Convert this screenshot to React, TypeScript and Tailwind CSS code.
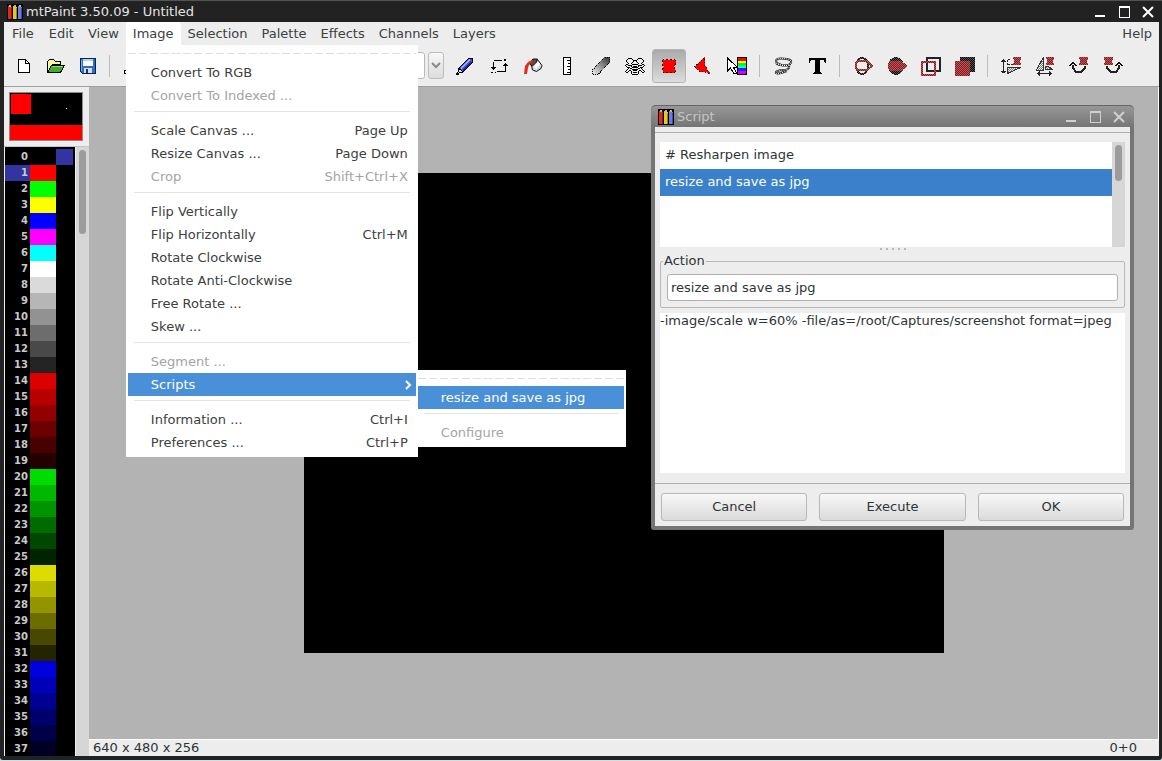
import { useState, type ReactNode } from "react";
import clsx from "clsx";

const palette = [
  "#000000", "#ff0000", "#00ff00", "#ffff00", "#0000ff", "#ff00ff", "#00ffff", "#ffffff",
  "#dadada", "#b6b6b6", "#929292", "#6d6d6d", "#494949", "#242424",
  "#dc0000", "#b80000", "#940000", "#6c0000", "#480000", "#240000",
  "#00dc00", "#00b800", "#009400", "#006c00", "#004800", "#002400",
  "#dcdc00", "#b8b800", "#949400", "#6c6c00", "#484800", "#242400",
  "#0000dc", "#0000b8", "#000094", "#00006c", "#000048", "#000024",
];

type Item = { label: string; keys?: string; off?: boolean; sub?: boolean };

const imageMenu: Item[][] = [
  [{ label: "Convert To RGB" }, { label: "Convert To Indexed ...", off: true }],
  [
    { label: "Scale Canvas ...", keys: "Page Up" },
    { label: "Resize Canvas ...", keys: "Page Down" },
    { label: "Crop", keys: "Shift+Ctrl+X", off: true },
  ],
  [
    { label: "Flip Vertically" },
    { label: "Flip Horizontally", keys: "Ctrl+M" },
    { label: "Rotate Clockwise" },
    { label: "Rotate Anti-Clockwise" },
    { label: "Free Rotate ..." },
    { label: "Skew ..." },
  ],
  [{ label: "Segment ...", off: true }, { label: "Scripts", sub: true }],
  [{ label: "Information ...", keys: "Ctrl+I" }, { label: "Preferences ...", keys: "Ctrl+P" }],
];

function Icon({ smooth, children }: { smooth?: boolean; children: ReactNode }) {
  return (
    <svg
      width="20"
      height="20"
      viewBox="0 0 20 20"
      shapeRendering={smooth ? "auto" : "crispEdges"}
      fill="none"
      aria-hidden="true"
    >
      {children}
    </svg>
  );
}

// checkerboard fills shared by the dithered icons
function Patterns() {
  return (
    <svg width="0" height="0" className="absolute" aria-hidden="true">
      <defs>
        <pattern id="redDither" width="2" height="2" patternUnits="userSpaceOnUse">
          <rect width="2" height="2" fill="#dc4a50" />
          <rect width="1" height="1" fill="#66282a" />
          <rect x="1" y="1" width="1" height="1" fill="#66282a" />
        </pattern>
        <pattern id="blackDither" width="2" height="2" patternUnits="userSpaceOnUse">
          <rect width="2" height="2" fill="#555" />
          <rect width="1" height="1" fill="#000" />
          <rect x="1" y="1" width="1" height="1" fill="#000" />
        </pattern>
        <pattern id="grayDither" width="2" height="2" patternUnits="userSpaceOnUse">
          <rect width="2" height="2" fill="#eee" />
          <rect width="1" height="1" fill="#777" />
          <rect x="1" y="1" width="1" height="1" fill="#777" />
        </pattern>
        <linearGradient id="fade" x1="1" y1="0" x2="0" y2="1">
          <stop offset="0.1" stopColor="#444" />
          <stop offset="1" stopColor="#f4f4f4" />
        </linearGradient>
      </defs>
    </svg>
  );
}

const NewIcon = () => (
  <Icon>
    <path d="M4.5 3.5h7l4 4v9h-11z" fill="#fff" stroke="#000" />
    <path d="M11.5 3.5v4h4" stroke="#000" />
  </Icon>
);

const OpenIcon = () => (
  <Icon>
    <path d="M1.5 16V5.5L3.5 3.5h4l2 2h5v3h-8z" fill="#fdf6a0" stroke="#000" />
    <path d="M1.5 16.5l4-7h13l-4 7z" fill="#3fae2a" stroke="#000" />
    <path d="M6 10.5h11" stroke="#8be070" />
  </Icon>
);

const SaveIcon = () => (
  <Icon>
    <path d="M2.5 2.5h15v15h-13l-2-2z" fill="#2c6fc4" stroke="#0b2350" />
    <rect x="5" y="3" width="10" height="7" fill="#fff" />
    <rect x="5" y="3" width="10" height="2" fill="#a9d4f5" />
    <rect x="6" y="12" width="8" height="5" fill="#d8dde4" />
    <rect x="8" y="13" width="2" height="4" fill="#1c3566" />
    <path d="M3.5 4v11" stroke="#6fb1ee" />
  </Icon>
);

const CutIcon = () => (
  <Icon>
    <path d="M2 14h3v3h-3zM5 13l8-10M7 3l6 11M13 14h3v3h-3z" stroke="#000" />
  </Icon>
);

const PencilIcon = () => (
  <Icon>
    <path d="M3.5 12.5L13.500 2.500h4v4L8 16z" fill="#4a50e8" stroke="#000" />
    <path d="M6 12.500l9-9" stroke="#a4aaff" strokeWidth="2" />
    <path d="M8 14.500l8.500-8.500" stroke="#1a1f9c" />
    <path d="M2.500 17.500l1.500-5 4 3.500z" fill="#e6dcb0" stroke="#000" />
    <path d="M1 17h3v2h-3z" fill="#000" />
  </Icon>
);

const SelectIcon = () => (
  <Icon>
    <path d="M4.5 5.500v6M4.500 4.500h8M16.500 8v8M8 15.500h9" stroke="#000" />
    <path d="M2 11h5v1h-5zM3 12h3v1h-3zM4 13h1v1h-1zM14 9h5v1h-5zM15 8h3v1h-3zM16 7h1v1h-1z" fill="#000" />
    <path d="M15 3h2v2h-2zM2 16h2v1h-2zM6 16h1v1h-1z" fill="#000" />
  </Icon>
);

const FillIcon = () => (
  <Icon smooth>
    <path d="M8.500 9.500L14.500 3.500L19 9.500L18 12.500L13.500 15.500L9.500 14z" fill="#d4dadb" stroke="#111" />
    <path d="M12 12l4-5" stroke="#fff" strokeWidth="3" />
    <path d="M7 6l3-3h4.500l-1 3-4 4-2-1z" fill="#70463c" stroke="#111" />
    <path d="M1 18l1-8 3-4 4-2v2L6 9l-1 3-1 6z" fill="#e0301a" />
  </Icon>
);

const RulerIcon = () => (
  <Icon>
    <rect x="6.5" y="1.5" width="7" height="17" fill="#fff" stroke="#000" />
    <path d="M10 4.5h3M11 7.5h2M10 10.5h3M11 13.5h2M10 16.5h3" stroke="#000" />
  </Icon>
);

const GradientIcon = () => (
  <Icon>
    <path d="M1 14L13 1h6v5L7 19h-6z" fill="url(#fade)" />
    <path d="M1.5 14L13.5 1.5h5v5L7 18.5h-5.5z" stroke="#000" strokeDasharray="1 1" />
  </Icon>
);

const cloneRows = [
  "...####......####...",
  "..#....#....#....#..",
  ".#......####......#.",
  ".#......#..#......#.",
  "..#....#....#....#..",
  "...#..#......#..#...",
  ".##....######....##.",
  "#..####......####..#",
  ".#....#.####.#....#.",
  "..###..######..###..",
  "...#.##......##.#...",
  "..#....######....#..",
  ".#..##..####..##..#.",
  "#..#..#......#..#..#",
  ".##...#.####.#...##.",
  "......#......#......",
  ".......######.......",
];

const CloneIcon = () => (
  <Icon>
    {cloneRows.map((row, y) =>
      [...row].map((c, x) => c === "#" && <rect key={`${x}-${y}`} x={x} y={y + 2} width="1" height="1" fill="#000" />)
    )}
  </Icon>
);

const PolygonIcon = () => (
  <Icon>
    <path d="M3.500 4.500l2-1h9l2 1v3l-1 3 1 4-1 2H4.500l-1-2 1-4-1-2z" fill="#f00" stroke="#300" strokeDasharray="2 2" />
    <path d="M4 4h12v4l-1 3 1 5H4l1-5-1-3z" fill="#f00" />
  </Icon>
);

const LassoFillIcon = () => (
  <Icon>
    <path d="M2 11L11 2v6l3 6 3 4-5-3H7z" fill="#f00" stroke="#f00" />
    <path d="M1.500 11L11.500 1.500v7l3 6 2 4-5-3H7z" stroke="#000" strokeDasharray="1 2" />
  </Icon>
);

const PickIcon = () => (
  <Icon>
    <rect x="11" y="2" width="9" height="3" fill="#f00" />
    <rect x="11" y="5" width="9" height="2" fill="#ff0" />
    <rect x="11" y="7" width="9" height="3" fill="#0f0" />
    <rect x="11" y="10" width="9" height="2" fill="#0ff" />
    <rect x="11" y="12" width="9" height="3" fill="#22f" />
    <rect x="11" y="15" width="9" height="3" fill="#d0d" />
    <path d="M10.5 1.5h9v17h-9z" stroke="#000" />
    <path d="M.5 2v13l3-3 3 5h3l-3-5.5h4z" fill="#fff" stroke="#000" />
  </Icon>
);

const lassoPath = "M14 9C10 11 3 7 3 5C3 2 9 2 14 3C19 4 19 6 17 8C14 11 5 9 3 7M16 9C17 13 14 14 10 14C5 14 2 16 3 17C5 19 10 16 14 15";

const LassoIcon = () => (
  <Icon smooth>
    <path d={lassoPath} stroke="#222" strokeWidth="2" />
    <path d={lassoPath} stroke="#fff" strokeDasharray="1 1" />
  </Icon>
);

const TextIcon = () => (
  <Icon>
    <path d="M2 2h17v5h-1l-1-3h-4v12l2 1v1H6v-1l2-1V4H4L3 7H2z" fill="#000" />
  </Icon>
);

const EllipseOutlineIcon = () => (
  <Icon>
    <ellipse cx="9" cy="10" rx="6" ry="8" stroke="url(#blackDither)" strokeWidth="2" />
    <path d="M3 7l2-2h9l5 5-5 4H5l-2-2z" stroke="url(#redDither)" strokeWidth="2" />
  </Icon>
);

const EllipseFillIcon = () => (
  <Icon>
    <ellipse cx="9" cy="10" rx="8" ry="9" fill="url(#blackDither)" />
    <path d="M3 5h11l3 2 3 3-3 3-3 2H3l-2-3V8z" fill="url(#redDither)" />
  </Icon>
);

const RectOutlineIcon = () => (
  <Icon>
    <rect x="6" y="2" width="13" height="13" stroke="#222" strokeWidth="2" />
    <rect x="1" y="6" width="13" height="13" stroke="url(#redDither)" strokeWidth="2" />
  </Icon>
);

const RectFillIcon = () => (
  <Icon>
    <rect x="5" y="1" width="15" height="15" fill="url(#blackDither)" />
    <rect x="0" y="5" width="15" height="15" fill="url(#redDither)" />
  </Icon>
);

const FlipVIcon = () => (
  <Icon>
    <path d="M2.5 3v14M0 5h5M1 4h3M0 15h5M1 16h3" stroke="#222" />
    <path d="M6.500 9V3.500h3M6.500 8.500h6" stroke="#222" strokeDasharray="2 1" />
    <path d="M6.500 11.500h13l-13 6z" fill="url(#grayDither)" stroke="#333" />
    <path d="M12 1h8v2l-1 2 1 4h-8l1-4z" fill="url(#redDither)" />
  </Icon>
);

const FlipHIcon = () => (
  <Icon>
    <path d="M8.500 1v13h-7z" fill="url(#grayDither)" stroke="#333" />
    <path d="M10.500 10.500h3l4 3h-7z" fill="url(#grayDither)" stroke="#333" />
    <path d="M2 17.500h15M4.500 15v5M3.500 16v3M14.500 15v5M15.500 16v3" stroke="#222" />
    <path d="M11 1h8v2l-1 2 1 4h-8l1-4z" fill="url(#redDither)" />
  </Icon>
);

const TurnLeftIcon = () => (
  <Icon>
    <path d="M4 9v3l3 4h5l4-4v-2" stroke="#222" strokeWidth="2" />
    <path d="M-1 10h2l3-2 3 2h2L4 6z" fill="#111" />
    <path d="M10 1h9v2l-1 2 1 4h-9l1-4z" fill="url(#redDither)" />
  </Icon>
);

const TurnRightIcon = () => (
  <Icon>
    <path d="M16 9v3l-3 4H8l-4-4v-2" stroke="#222" strokeWidth="2" />
    <path d="M20 10h-2l-2-2-3 2h-2l5-4z" fill="#111" />
    <path d="M1 1h9v2l-1 2 1 4H1l1-4-1-2z" fill="url(#redDither)" />
  </Icon>
);

function AppIcon() {
  return (
    <svg width="16" height="16" viewBox="0 0 16 16" shapeRendering="crispEdges" aria-hidden="true">
      <rect width="16" height="16" fill="#000" />
      <path d="M1 4l1-3h2l1 3v11H1z" fill="#e02a12" />
      <path d="M6 4l1-3h2l1 3v11H6z" fill="#e0cc20" />
      <path d="M11 4l1-3h2l1 3v11h-4z" fill="#6a78e8" />
      <path d="M2 1h2v2H2zM7 1h2v2H7zM12 1h2v2h-2z" fill="#c8b49a" />
      <path d="M4 4h1v11H4zM9 4h1v11H9zM14 4h1v11h-1z" fill="#000" opacity=".35" />
    </svg>
  );
}

function WindowButtons({ dim }: { dim?: boolean }) {
  return (
    <div className={clsx("flex items-center gap-3", dim ? "text-[#d0d0d0]" : "text-white")}>
      <button aria-label="Minimize">
        <svg width="12" height="12" viewBox="0 0 12 12" className="block" shapeRendering="crispEdges">
          <path d="M1 9h10v2H1z" fill="currentColor" />
        </svg>
      </button>
      <button aria-label="Maximize">
        <svg width="12" height="12" viewBox="0 0 12 12" className="block" shapeRendering="crispEdges">
          <path d="M1 0h11v12H1zM2 2v9h9V2z" fill="currentColor" fillRule="evenodd" />
        </svg>
      </button>
      <button aria-label="Close">
        <svg width="12" height="12" viewBox="0 0 12 12" className="block">
          <path d="M1 1l10 10M11 1L1 11" stroke="currentColor" strokeWidth="2" />
        </svg>
      </button>
    </div>
  );
}

function Tool({ label, active, narrow, children }: { label: string; active?: boolean; narrow?: boolean; children: ReactNode }) {
  return (
    <button
      aria-label={label}
      className={clsx(
        "flex h-[34px] shrink-0 items-center justify-center rounded-[3px]",
        narrow ? "w-8" : "w-[34px]",
        active && "border border-[#b4b6b4] bg-linear-to-b from-[#a9aaa9] to-[#dcdcdc]"
      )}
    >
      {children}
    </button>
  );
}

const ToolSep = () => <div className="mr-[6px] ml-[5px] h-[22px] w-px shrink-0 bg-[#bcbcbc]" />;

const MenuSep = () => (
  <div className="mx-[6px] h-3 pt-1">
    <hr className="border-[#e4e4e4]" />
  </div>
);

const TearOff = () => (
  <div className="h-4 pt-2">
    <div className="h-px bg-[repeating-linear-gradient(90deg,#dedede_0_8px,transparent_8px_11px)]" />
  </div>
);

function ImageMenu() {
  return (
    <div className="absolute top-full left-0 z-20 w-[292px] bg-white px-[2px] pb-[3px]">
      <TearOff />
      {imageMenu.map((group, g) => (
        <div key={g}>
          {g > 0 && <MenuSep />}
          {group.map((item) => (
            <div key={item.label} className="relative">
              <button
                className={clsx(
                  "flex h-[23px] w-full items-center justify-between pr-2 pl-[23px]",
                  item.off && "text-[#a4a4a4]",
                  item.sub && "bg-[#4a90d9] text-white"
                )}
              >
                <span>{item.label}</span>
                {item.keys && <span>{item.keys}</span>}
                {item.sub && (
                  <svg width="8" height="10" viewBox="0 0 8 10" className="-mr-1" fill="none">
                    <path d="M2 1l4 4-4 4" stroke="#fff" strokeWidth="2" />
                  </svg>
                )}
              </button>
              {item.sub && <ScriptsMenu />}
            </div>
          ))}
        </div>
      ))}
    </div>
  );
}

function ScriptsMenu() {
  return (
    <div className="absolute -top-[3px] left-full ml-[2px] w-[208px] bg-white pr-[2px] pb-[3px]">
      <TearOff />
      <button className="flex h-[23px] w-full items-center bg-[#4a90d9] pl-[23px] text-white">resize and save as jpg</button>
      <MenuSep />
      <button className="flex h-[23px] w-full items-center pl-[23px] text-[#a4a4a4]">Configure</button>
    </div>
  );
}

function MenuBar() {
  return (
    <nav className="flex h-[23px] shrink-0 items-stretch text-[#3c4040]">
      <button className="px-2">File</button>
      <button className="px-[7px]">Edit</button>
      <button className="px-[7px]">View</button>
      <div className="relative rounded-t-[3px] bg-white">
        <button className="h-full px-[7px]">Image</button>
        <ImageMenu />
      </div>
      <button className="px-[7px]">Selection</button>
      <button className="px-[7px]">Palette</button>
      <button className="px-[7px]">Effects</button>
      <button className="px-[7px]">Channels</button>
      <button className="px-[7px]">Layers</button>
      <button className="ml-auto px-[7px]">Help</button>
    </nav>
  );
}

function Toolbar() {
  return (
    <div className="flex h-[42px] shrink-0 items-center border-b border-[#a0a0a0] pl-1">
      <Tool label="New" narrow><NewIcon /></Tool>
      <Tool label="Open" narrow><OpenIcon /></Tool>
      <Tool label="Save" narrow><SaveIcon /></Tool>
      <ToolSep />
      <Tool label="Cut" narrow><CutIcon /></Tool>
      <div className="ml-auto flex w-[280px] shrink-0 gap-[3px]">
        <input aria-label="Zoom" className="h-[27px] min-w-0 flex-1 rounded-[3px] border border-[#b8b8b8] bg-white" />
        <button
          aria-label="Zoom list"
          className="mr-1 flex h-[27px] w-4 items-center justify-center rounded-[3px] border border-[#bcbcbc] bg-linear-to-b from-[#f8f8f8] to-[#dcdcdc]"
        >
          <svg width="10" height="7" viewBox="0 0 10 7" fill="none">
            <path d="M1 1l4 4 4-4" stroke="#8a8a8a" strokeWidth="2" />
          </svg>
        </button>
      </div>
      <Tool label="Paint"><PencilIcon /></Tool>
      <Tool label="Shuffle"><SelectIcon /></Tool>
      <Tool label="Flood fill"><FillIcon /></Tool>
      <Tool label="Straight line"><RulerIcon /></Tool>
      <Tool label="Gradient"><GradientIcon /></Tool>
      <Tool label="Clone"><CloneIcon /></Tool>
      <Tool label="Make selection" active><PolygonIcon /></Tool>
      <Tool label="Polygon selection"><LassoFillIcon /></Tool>
      <Tool label="Pick colour"><PickIcon /></Tool>
      <ToolSep />
      <Tool label="Lasso"><LassoIcon /></Tool>
      <Tool label="Paste text"><TextIcon /></Tool>
      <ToolSep />
      <Tool label="Ellipse outline"><EllipseOutlineIcon /></Tool>
      <Tool label="Fill ellipse"><EllipseFillIcon /></Tool>
      <Tool label="Outline selection"><RectOutlineIcon /></Tool>
      <Tool label="Fill selection"><RectFillIcon /></Tool>
      <ToolSep />
      <Tool label="Flip vertically"><FlipVIcon /></Tool>
      <Tool label="Flip horizontally"><FlipHIcon /></Tool>
      <Tool label="Rotate anti-clockwise"><TurnLeftIcon /></Tool>
      <Tool label="Rotate clockwise"><TurnRightIcon /></Tool>
      <div className="w-[29px] shrink-0" />
    </div>
  );
}

function Sidebar() {
  return (
    <aside className="flex w-[85px] shrink-0 flex-col overflow-hidden">
      <div className="mt-[5px] ml-[5px] flex h-[49px] w-[74px] flex-col justify-between border border-[#8a8a8a] bg-black">
        <svg width="72" height="32" viewBox="0 0 72 32" aria-hidden="true">
          <rect x="1" y="1" width="20" height="20" fill="#f00" />
          <rect x="56" y="15" width="1" height="1" fill="#fff" />
        </svg>
        <div className="h-[15px] bg-[#f00]" />
      </div>
      <div className="mt-[5px] flex min-h-0 flex-1 border-t border-[#c4c4c4]">
        <div className="ml-px w-[70px] overflow-hidden bg-black pt-[2px]">
          {palette.map((color, i) => (
            <div key={i} className="flex h-4 text-[10px] leading-4 font-bold text-[#c8c8c8]">
              <span className={clsx("w-[25px] pr-[2px] text-right", i === 1 && "bg-[#3434a0]")}>{i}</span>
              <span className="w-[26px]" style={{ backgroundColor: color }} />
              {i === 0 && <span className="w-[17px] bg-[#3434a0]" />}
            </div>
          ))}
        </div>
        <div className="ml-px flex-1 bg-[#d6d6d6] pt-[3px] pl-[3px]">
          <div className="h-[84px] w-[7px] rounded-full bg-[#9c9c9c]" />
        </div>
      </div>
    </aside>
  );
}

function ScriptDialog() {
  const [name, setName] = useState("resize and save as jpg");
  const [script, setScript] = useState("-image/scale w=60% -file/as=/root/Captures/screenshot format=jpeg");

  return (
    <section
      aria-label="Script"
      className="absolute top-[105px] left-[651px] z-10 flex h-[425px] w-[483px] flex-col rounded-t-[5px] rounded-b-[3px] bg-[#757575] px-1 pb-1"
    >
      <header className="-mx-1 flex h-[22px] shrink-0 items-center justify-between rounded-t-[5px] border-t border-[#666] bg-linear-to-b from-[#979797] to-[#757575] pr-[9px] pl-[7px] text-[#c4c4c4]">
        <div className="flex items-center gap-[3px]">
          <AppIcon />
          <h2>Script</h2>
        </div>
        <WindowButtons dim />
      </header>
      <div className="flex min-h-0 flex-1 flex-col bg-[#ededed]">
        <div className="h-[15px] shrink-0 pt-[5px]">
          <hr className="border-[#b0b0b0]" />
        </div>
        <div className="mx-[5px] flex h-[105px] shrink-0 bg-white">
          <ul className="flex-1">
            <li className="h-[27px] px-[5px] leading-[26px]"># Resharpen image</li>
            <li className="h-[27px] bg-[#3a80cb] px-[5px] leading-[26px] text-white">resize and save as jpg</li>
          </ul>
          <div className="w-[13px] bg-[#d6d6d6] pt-[3px] pl-[3px]">
            <div className="h-9 w-[7px] rounded-full bg-[#9c9c9c]" />
          </div>
        </div>
        <div className="flex h-[6px] shrink-0 justify-center gap-1 pt-px">
          {[0, 1, 2, 3, 4].map((i) => (
            <span key={i} className="h-[2px] w-[2px] bg-[#b8b8b8]" />
          ))}
        </div>
        <fieldset className="mx-[5px] h-[55px] shrink-0 rounded-[2px] border border-[#b8b8b8] px-[6px]">
          <legend className="-ml-1 px-px leading-4">Action</legend>
          <input
            aria-label="Action"
            className="mt-[5px] block h-[27px] w-full rounded-[3px] border border-[#b0b0b0] bg-white px-[3px]"
            value={name}
            onChange={(e) => setName(e.target.value)}
          />
        </fieldset>
        <textarea
          aria-label="Script text"
          className="mx-[5px] mt-[5px] block h-[160px] shrink-0 resize-none overflow-hidden bg-white leading-4 whitespace-pre"
          value={script}
          onChange={(e) => setScript(e.target.value)}
        />
        <hr className="mt-[10px] border-[#b0b0b0]" />
        <div className="mx-[6px] mt-[9px] grid h-7 shrink-0 grid-cols-3 gap-3">
          {["Cancel", "Execute", "OK"].map((label) => (
            <button key={label} className="rounded-[3px] border border-[#b8b8b8] bg-linear-to-b from-[#f8f8f8] to-[#dadada]">
              {label}
            </button>
          ))}
        </div>
      </div>
    </section>
  );
}

export default function App() {
  return (
    <div className="relative flex h-screen flex-col overflow-hidden bg-[#d5dde4] pb-px font-['DejaVu_Sans',sans-serif] text-[13px] text-[#2e3436]">
      <Patterns />
      <div className="flex min-h-0 flex-1 flex-col rounded-b-[3px] border-t border-[#505454] bg-[#222] pr-[3px] pb-1 pl-1">
        <header className="flex h-[21px] shrink-0 items-center justify-between pr-[5px] pl-[3px] text-[#e4e4e4]">
          <div className="flex items-center gap-[3px]">
            <AppIcon />
            <h1>mtPaint 3.50.09 - Untitled</h1>
          </div>
          <WindowButtons />
        </header>
        <div className="flex min-h-0 flex-1 flex-col bg-[#ededed]">
          <MenuBar />
          <Toolbar />
          <div className="flex min-h-0 flex-1">
            <Sidebar />
            <div className="flex min-w-0 flex-1 flex-col">
              <main className="flex min-h-0 flex-1 items-center justify-center border-r border-white bg-[#b3b3b3]">
                <div className="h-[480px] w-[640px] shrink-0 bg-black" />
              </main>
              <footer className="flex h-[17px] shrink-0 items-center justify-between border-t border-white pr-[22px] pl-1">
                <span>640 x 480 x 256</span>
                <span>0+0</span>
              </footer>
            </div>
          </div>
        </div>
      </div>
      <ScriptDialog />
    </div>
  );
}
